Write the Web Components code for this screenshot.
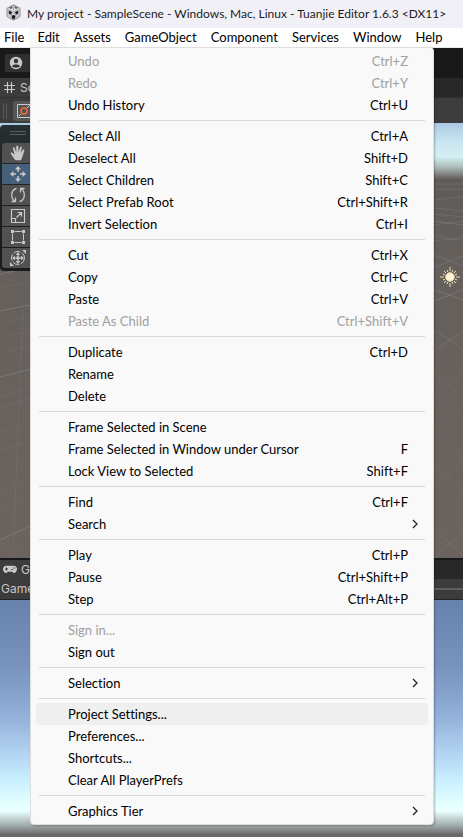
<!DOCTYPE html>
<html lang="en">
<head>
<meta charset="utf-8">
<title>My project - SampleScene - Windows, Mac, Linux - Tuanjie Editor</title>
<style>
  html, body { height: 100%; margin: 0; }
  body { font: 13px/22px Lato, "Noto Sans CJK SC", sans-serif; font-feature-settings: "liga" 0; color: #000; overflow: hidden; }
</style>
</head>
<body>
<editor-window></editor-window>

<script>
const define = (name, html, setup) => {
  const template = document.createElement('template');
  template.innerHTML = html;
  customElements.define(name, class extends HTMLElement {
    constructor() {
      super();
      this.attachShadow({ mode: 'open' }).append(template.content.cloneNode(true));
    }
    connectedCallback() { if (setup) setup(this, this.shadowRoot); }
  });
};

define('title-bar', `
<style>
  :host { display: flex; align-items: center; gap: 6px; height: 28px; padding: 0 6px; box-sizing: border-box; background: #f2f0f7; color: #1b1b1b; white-space: nowrap; }
  h1 { margin: 0; font: inherit; font-size: 12px; line-height: 26px; }
  svg { flex: none; margin-bottom: 3px; }
</style>
<svg width="15" height="17" viewBox="0 0 15 17" aria-hidden="true">
  <path d="M7.500.800 14 4.300v8.200L7.500 16.200 1 12.500V4.300z" fill="#dcdcdf" stroke="#8a8a90"/>
  <path d="M7.500 1v5M2 5l5.500 3L13 5M7.500 8 3 14M7.500 8l4.500 6M1 12l3-2M14 12l-3-2" stroke="#a9a9ae" fill="none"/>
  <path d="M3.500 3.500 6 2.300l.500 1.700-2 1zM9 2.300l2.500 1.200-1 1.500-2-1z" fill="#55555a"/>
  <path d="M2.500 6.500 6 8l-.800 2.500L3 10zM9 8l3.500-1.500L12 10l-2.200.500zM5.500 11.800 7.500 11l2 .800L9 14.500l-1.500.800L6 14.500z" fill="#1c1c1e"/>
</svg>
<h1><slot></slot></h1>`);

define('menu-bar', `
<style>
  :host { display: flex; height: 20px; background: #fff; box-sizing: border-box; border-bottom: 1px solid #e9e9e9; }
</style>
<slot></slot>`);

define('menu-title', `
<style>
  :host { display: block; }
  button { font: inherit; font-feature-settings: inherit; line-height: 19px; height: 19px; padding: 0 7px; border: 0; background: none; color: #000; white-space: nowrap; display: block; }
  :host([first]) button { padding-left: 4px; padding-right: 6px; }
  :host([open]) button { background: #f9f9f9; }
</style>
<button type="button"><slot></slot></button>`);

define('menu-popup', `
<style>
  :host { display: block; box-sizing: border-box; padding: 2px 5px; background: #f9f9f9; border: 1px solid #dedede; border-radius: 0 4px 4px 4px; box-shadow: 1px 1px 2px rgba(0,0,0,.25); }
</style>
<div role="menu"><slot></slot></div>`);

define('menu-group', `
<style>
  :host { display: block; }
  :host(:not(:first-child))::before { content: ""; display: block; height: 1px; margin: 4px 3px; background: #d7d7d7; }
</style>
<slot></slot>`);

define('menu-entry', `
<style>
  :host { display: block; }
  button { display: flex; align-items: center; justify-content: space-between; width: 100%; height: 22px; padding: 0 20px 0 32px; border: 0; border-radius: 4px; background: none; font: inherit; font-feature-settings: inherit; color: #000; text-align: left; white-space: nowrap; }
  :host([highlighted]) button { background: #efefef; }
  button:disabled { color: #a0a0a0; }
  svg { display: none; margin-right: -11px; }
  :host([submenu]) svg { display: block; }
  :host([submenu]) .key { display: none; }
</style>
<button type="button" role="menuitem"><span><slot></slot></span><span class="key"></span>
<svg width="8" height="10" viewBox="0 0 8 10" aria-hidden="true"><path d="M2 1 6 5 2 9" fill="none" stroke="#222" stroke-width="1.300"/></svg></button>`,
(host, root) => {
  root.querySelector('.key').textContent = host.getAttribute('key') || '';
  root.querySelector('button').disabled = host.hasAttribute('off');
});

define('edit-menu', `
<style>:host { display: block; }</style>
<menu-popup>
  <menu-group><menu-entry off key="Ctrl+Z">Undo</menu-entry><menu-entry off key="Ctrl+Y">Redo</menu-entry><menu-entry key="Ctrl+U">Undo History</menu-entry></menu-group>
  <menu-group><menu-entry key="Ctrl+A">Select All</menu-entry><menu-entry key="Shift+D">Deselect All</menu-entry><menu-entry key="Shift+C">Select Children</menu-entry><menu-entry key="Ctrl+Shift+R">Select Prefab Root</menu-entry><menu-entry key="Ctrl+I">Invert Selection</menu-entry></menu-group>
  <menu-group><menu-entry key="Ctrl+X">Cut</menu-entry><menu-entry key="Ctrl+C">Copy</menu-entry><menu-entry key="Ctrl+V">Paste</menu-entry><menu-entry off key="Ctrl+Shift+V">Paste As Child</menu-entry></menu-group>
  <menu-group><menu-entry key="Ctrl+D">Duplicate</menu-entry><menu-entry>Rename</menu-entry><menu-entry>Delete</menu-entry></menu-group>
  <menu-group><menu-entry>Frame Selected in Scene</menu-entry><menu-entry key="F">Frame Selected in Window under Cursor</menu-entry><menu-entry key="Shift+F">Lock View to Selected</menu-entry></menu-group>
  <menu-group><menu-entry key="Ctrl+F">Find</menu-entry><menu-entry submenu>Search</menu-entry></menu-group>
  <menu-group><menu-entry key="Ctrl+P">Play</menu-entry><menu-entry key="Ctrl+Shift+P">Pause</menu-entry><menu-entry key="Ctrl+Alt+P">Step</menu-entry></menu-group>
  <menu-group><menu-entry off>Sign in...</menu-entry><menu-entry>Sign out</menu-entry></menu-group>
  <menu-group><menu-entry submenu>Selection</menu-entry></menu-group>
  <menu-group><menu-entry highlighted>Project Settings...</menu-entry><menu-entry>Preferences...</menu-entry><menu-entry>Shortcuts...</menu-entry><menu-entry>Clear All PlayerPrefs</menu-entry></menu-group>
  <menu-group><menu-entry submenu>Graphics Tier</menu-entry></menu-group>
</menu-popup>`);

define('main-toolbar', `
<style>
  :host { display: flex; align-items: center; height: 30px; padding-left: 5px; background: #191919; box-sizing: border-box; }
  button { width: 44px; height: 18px; padding: 0 0 0 4px; border: 0; background: #303030; text-align: left; }
  svg { display: block; }
</style>
<button type="button" aria-label="Account"><svg width="14" height="14" viewBox="0 0 14 14"><circle cx="7" cy="7" r="6.200" fill="#c8c8c8"/><circle cx="7" cy="5" r="2.200" fill="#303030"/><path d="M3 10.300C4 7.800 10 7.800 11 10.300 9.500 12.200 4.500 12.200 3 10.300" fill="#303030"/></svg></button>`);

define('panel-tabs', `
<style>
  :host { display: flex; height: 19px; background: #282828; color: #c8c8c8; font: 12px/19px Inter, sans-serif; box-sizing: border-box; }
  button { display: flex; align-items: center; gap: 4px; min-width: 70px; padding: 0 8px 0 3px; border: 0; background: #3c3c3c; font: inherit; color: inherit; }
</style>
<button type="button"><slot name="icon"></slot><slot></slot></button>`);

define('tool-strip', `
<style>
  :host { display: block; width: 36px; padding: 6px 2px 3px; box-sizing: border-box; border-radius: 4px; background: linear-gradient(#263033, #24282a 20%, #1c1c1c 80%); }
  .grip { height: 2px; margin: 0 8px 8px; border: solid #565e60; border-width: 1px 0; }
  .tools { display: grid; gap: 1px; border-radius: 3px; overflow: hidden; }
  button { height: 20px; padding: 0 0 0 8px; border: 0; background: #515151; }
  button.on { background: #46607c; }
  svg { display: block; fill: none; stroke: #c8c8c8; }
  svg .solid { fill: #c8c8c8; stroke: none; }
</style>
<div class="grip"></div>
<div class="tools">
  <button type="button" aria-label="View"><svg width="16" height="16" viewBox="0 0 16 16"><path class="solid" d="M5.400 15.200C3.800 13.500 2.500 11 .8 8.700.5 7.700 1.700 7.200 2.500 8L4.600 9.800 3 3.600C2.700 2.200 4.300 1.800 4.700 3.100L6.300 7.400 6.200 1.700C6.200.3 8.200.3 8.300 1.700L8.700 7.300 10.100 2.200C10.500 1 12 1.300 11.800 2.700L11 8 12.800 4.900C13.500 3.800 14.800 4.500 14.300 5.700L12.300 12 11 15.200z"/></svg></button>
  <button type="button" class="on" aria-label="Move"><svg width="16" height="16" viewBox="0 0 16 16"><path d="M8 2v4M8 10v4M2 8h4M10 8h4" stroke-width="1.500"/><path class="solid" d="M8 0l3 3.500H5zM8 16l3-3.500H5zM0 8l3.500-3v6zM16 8l-3.500-3v6z"/></svg></button>
  <button type="button" aria-label="Rotate"><svg width="16" height="16" viewBox="0 0 16 16"><path d="M6.500 1.500C.5 3 .5 11 4.500 14M1.500 14.500h4v-4M9.500 14.500c6-1.500 6-9.500 2-12.500M14.500 1.500h-4v4" stroke-width="1.300"/></svg></button>
  <button type="button" aria-label="Scale"><svg width="16" height="16" viewBox="0 0 16 16"><path d="M1.500 10V1.500h13v13H6M1.500 10.500h4v4h-4zM6.500 9.500l5-5M7.500 4.500h4v4" stroke-width="1.200"/></svg></button>
  <button type="button" aria-label="Rect"><svg width="16" height="16" viewBox="0 0 16 16"><path d="M4.500 2.500h7M4.500 13.500h7M2.500 4.500v7M13.500 4.500v7"/><path class="solid" d="M1 1h3v3H1zM12 1h3v3h-3zM1 12h3v3H1zM12 12h3v3h-3z"/></svg></button>
  <button type="button" aria-label="Transform"><svg width="16" height="16" viewBox="0 0 16 16"><circle cx="8" cy="8" r="6.500" stroke-dasharray="7 1.500"/><path d="M8 3v10M3 8h10"/><path class="solid" d="M8 2l2.200 3H5.800zM8 14l2.200-3H5.800zM2 8l3-2.200v4.400zM14 8l-3-2.200v4.400zM12 0h4v4zM0 12v4h4zM6.500 6.500h3v3h-3z"/></svg></button>
</div>`);

define('scene-panel', `
<style>
  :host { display: flex; flex-direction: column; min-height: 0; }
  .bar { display: flex; align-items: center; gap: 6px; height: 26px; padding-left: 3px; background: #3c3c3c; box-sizing: border-box; border-top: 1px solid #303030; }
  .grip { width: 2px; height: 16px; border: solid #5c5c5c; border-width: 0 1px; }
  .bar button { width: 36px; height: 20px; padding: 0 0 0 3px; border: 0; border-radius: 3px; background: #555; }
  .bar svg { display: block; }
  .view { position: relative; flex: 1; min-height: 0; }
  .world { display: block; width: 100%; height: 100%; }
  tool-strip { position: absolute; top: 2px; left: 0; }
  .sun { position: absolute; top: 144px; right: 3px; }
</style>
<panel-tabs>Scene<svg slot="icon" width="13" height="13" viewBox="0 0 13 13" fill="none" stroke="#c8c8c8"><path d="M4.500 1v11M8.500 1v11M1 4.500h11M1 8.500h11" stroke-width="1.200"/></svg></panel-tabs>
<div class="bar"><span class="grip"></span><button type="button" aria-label="Tool handle"><svg width="16" height="16" viewBox="0 0 16 16" fill="none" stroke="#c8c8c8"><path d="M16 1.500H1.500v13H16M3 13l2-2M11 5l3-3"/><circle cx="8" cy="8" r="3" stroke="#f2683c" stroke-width="1.500"/></svg></button></div>
<div class="view">
  <svg class="world" viewBox="0 0 463 435" preserveAspectRatio="none" aria-hidden="true">
    <defs>
      <linearGradient id="sky" x2="0" y2="1"><stop stop-color="#acc9e5"/><stop offset=".35" stop-color="#c9e6f2"/><stop offset=".6" stop-color="#d5f0f2"/><stop offset=".78" stop-color="#aebdbc"/><stop offset="1" stop-color="#625f5c"/></linearGradient>
      <linearGradient id="ground" x2="0" y2="1"><stop stop-color="#5f5b59"/><stop offset=".25" stop-color="#66605c"/><stop offset="1" stop-color="#6b635e"/></linearGradient>
    </defs>
    <rect y="54" width="463" height="381" fill="url(#ground)"/>
    <rect width="463" height="56" fill="url(#sky)"/>
    <g fill="none" stroke="#8a8785" stroke-opacity=".6">
      <path d="M0 151 30 145M0 188 30 182M0 254 30 246M0 417 30 403"/>
      <path d="M434 77l29-3M434 85l29 3M434 102l29-4M434 91l29 3M434 61h29M434 66h29M434 118 450 116 463 114M434 112l16 4 13 1M434 145l16-7 13-5M434 132l16 6 13 5M434 228l16-11 13-9M434 207l16 10 13 10M434 435l29-27M434 406l29 27" stroke-opacity=".35"/>
      <path d="M434 98l29 4M434 167l16 5 13 5M434 178l16-6 13-6" stroke-opacity=".5"/>
    </g>
    <g fill="none" stroke="#807b78" stroke-opacity=".3">
      <path d="M23 185Q17 330 13 435M0 164l30-4M0 200l30-6M0 214l30-6M0 230l30-8M0 274l30-9M0 285l30-10M0 308l30-10M0 328l30-10M0 348l30-12M0 370l30-14M0 389l30-13M434 250l29 25M434 275l29-25M434 308l29-25M434 340l29 26M434 365l29-28M434 312l29 22"/>
    </g>
  </svg>
  <tool-strip></tool-strip>
  <svg class="sun" width="20" height="20" viewBox="0 0 20 20" aria-hidden="true"><g stroke="#b9ae8c" stroke-width="1.600"><path d="M10 0v4M10 16v4M0 10h4M16 10h4"/><path d="M4 4l2 2M14 14l2 2M16 4l-2 2M6 14l-2 2M7 3l.800 2M13 3l-.800 2M7 17l.800-2M13 17l-.800-2M3 7l2 .800M3 13l2-.800M17 7l-2 .800M17 13l-2-.800" stroke="#eee0b8" stroke-width="1"/></g><circle cx="10" cy="10" r="4.400" fill="#fff3d3" stroke="#d6c9a3"/></svg>
</div>`);

define('game-panel', `
<style>
  :host { display: flex; flex-direction: column; min-height: 0; border-top: 2px solid #191919; }
  .bar { display: flex; align-items: center; height: 21px; padding-left: 1px; box-sizing: border-box; border-bottom: 1px solid #232323; background: #3c3c3c; color: #c8c8c8; font: 12px/20px Inter, sans-serif; }
  .bar button { padding: 0; border: 0; background: none; font: inherit; color: inherit; }
  .slider { flex: 1; height: 2px; margin-left: 60px; background: #5e5e5e; }
  .view { flex: 1; background: linear-gradient(#6783ad, #7793be 28%, #91aed7 48%, #b5d6f4 66%, #c9efff 76%, #e5ffff 86%, #eaffff 89%, #a3adad 95%, #6a6868 99%); }
</style>
<panel-tabs>Game<svg slot="icon" width="14" height="9" viewBox="0 0 14 9"><path d="M3.500.8h7a3.200 3.200 0 0 1 3.200 4.500C13 8.500 10.500 8.700 9.200 6.800H4.800C3.500 8.700 1 8.500.3 5.300A3.200 3.200 0 0 1 3.500.8" fill="#c8c8c8"/><path d="M2 4h3M3.500 2.500v3M8.500 4.500h1.500M10.500 3H12" stroke="#3c3c3c"/></svg></panel-tabs>
<div class="bar"><button type="button">Game</button><span class="slider"></span></div>
<div class="view"></div>`);

define('editor-window', `
<style>
  :host { display: flex; flex-direction: column; min-height: 100vh; position: relative; }
  scene-panel { flex: 480 1 0; }
  game-panel { flex: 277 1 0; }
  edit-menu { position: absolute; top: 47px; left: 30px; right: 29px; }
</style>
<title-bar>My project - SampleScene - Windows, Mac, Linux - Tuanjie Editor 1.6.3 &lt;DX11&gt;</title-bar>
<menu-bar>
  <menu-title first>File</menu-title><menu-title open>Edit</menu-title><menu-title>Assets</menu-title><menu-title>GameObject</menu-title><menu-title>Component</menu-title><menu-title>Services</menu-title><menu-title>Window</menu-title><menu-title>Help</menu-title>
</menu-bar>
<main-toolbar></main-toolbar>
<scene-panel></scene-panel>
<game-panel></game-panel>
<edit-menu></edit-menu>`);
</script>
</body>
</html>
